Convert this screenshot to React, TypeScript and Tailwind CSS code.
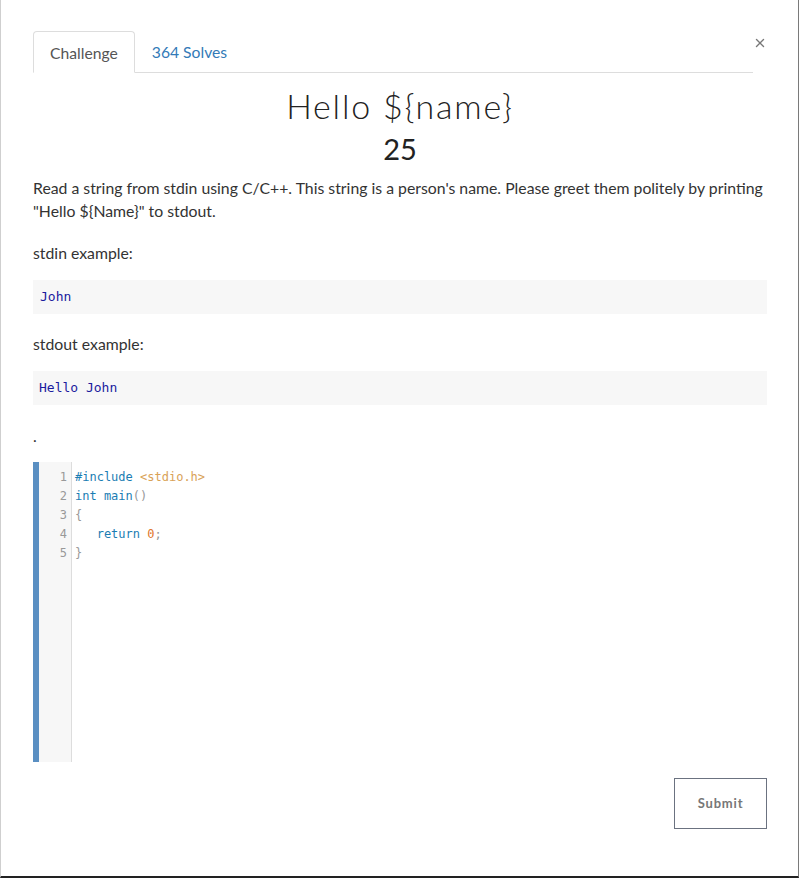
import { X } from "lucide-react";

const codeLines: { n: number; parts: { t: string; c: string }[] }[] = [
  {
    n: 1,
    parts: [
      { t: "#include ", c: "text-[#1a7db3]" },
      { t: "<stdio.h>", c: "text-[#d9a257]" },
    ],
  },
  {
    n: 2,
    parts: [
      { t: "int main", c: "text-[#1a7db3]" },
      { t: "()", c: "text-[#999]" },
    ],
  },
  { n: 3, parts: [{ t: "{", c: "text-[#999]" }] },
  {
    n: 4,
    parts: [
      { t: "   return ", c: "text-[#1a7db3]" },
      { t: "0", c: "text-[#e0752d]" },
      { t: ";", c: "text-[#999]" },
    ],
  },
  { n: 5, parts: [{ t: "}", c: "text-[#999]" }] },
];

const title = "Hello ${name}";
const description =
  'Read a string from stdin using C/C++. This string is a person\'s name. Please greet them politely by printing "Hello ${Name}" to stdout.';

export default function App() {
  return (
    <div className="h-[878px] w-[799px] overflow-hidden bg-white border-l border-l-[#cfcfcf] border-r border-r-[#7a7a7a] border-b-2 border-b-[#222] font-['Lato','Liberation_Sans',sans-serif] text-[#333]">
      <div className="pl-[32px] pr-[31px] pt-[31px]">
        {/* tabs */}
        <div className="flex items-start">
          <div className="flex flex-1 border-b border-[#ddd]">
            <div className="-mb-px h-[42px] rounded-t-[4px] border border-[#ddd] border-b-white bg-white px-[16px] pt-[10px] text-[15.7px] text-[#555]">
              Challenge
            </div>
            <div className="h-[41px] px-[17px] pt-[10px] text-[15.7px] text-[#337ab7]">364 Solves</div>
          </div>
          <button className="mt-[3px] w-[14px] text-[#777] flex justify-center">
            <X size={18} strokeWidth={2.4} />
          </button>
        </div>

        {/* title */}
        <h1 className="mt-[13px] text-center text-[34px] leading-[40px] font-light tracking-[1.8px] text-[#222]">
          {title}
        </h1>
        <h3 className="mt-[7px] text-center text-[29px] leading-[32px] font-normal text-[#222]">25</h3>

        <p className="mt-[11px] text-[15.8px] leading-[23px]">{description}</p>
        <p className="mt-[19px] text-[15.8px] leading-[23px]">stdin example:</p>
        <pre className="mt-[16px] h-[34px] bg-[#f7f7f7] px-[7px] pt-[8px] font-['DejaVu_Sans_Mono',monospace] text-[13px] leading-[18px] text-[#1b1b9e]">
          John
        </pre>
        <p className="mt-[18px] text-[15.8px] leading-[23px]">stdout example:</p>
        <pre className="mt-[16px] h-[34px] bg-[#f7f7f7] px-[6px] pt-[8px] font-['DejaVu_Sans_Mono',monospace] text-[13px] leading-[18px] text-[#1b1b9e]">
          Hello John
        </pre>
        <p className="mt-[19px] text-[15.8px] leading-[23px]">.</p>

        {/* editor */}
        <div className="mt-[15px] flex h-[300px] border-l-[6px] border-[#5a8fc2]">
          <div className="w-[33px] border-r border-[#ddd] bg-[#f7f7f7] pt-[6px] pr-[4px] text-right font-['DejaVu_Sans_Mono',monospace] text-[12px] leading-[19px] text-[#999]">
            {codeLines.map((l) => (
              <div key={l.n}>{l.n}</div>
            ))}
          </div>
          <div className="flex-1 pt-[6px] pl-[3px] font-['DejaVu_Sans_Mono',monospace] text-[12px] leading-[19px] whitespace-pre">
            {codeLines.map((l) => (
              <div key={l.n}>
                {l.parts.map((p, i) => (
                  <span key={i} className={p.c}>
                    {p.t}
                  </span>
                ))}
              </div>
            ))}
          </div>
        </div>

        <div className="mt-[16px] flex justify-end">
          <button className="h-[51px] w-[93px] border border-[#6b7280] bg-white text-[13px] font-bold tracking-[0.8px] text-[#777]">
            Submit
          </button>
        </div>
      </div>
    </div>
  );
}
